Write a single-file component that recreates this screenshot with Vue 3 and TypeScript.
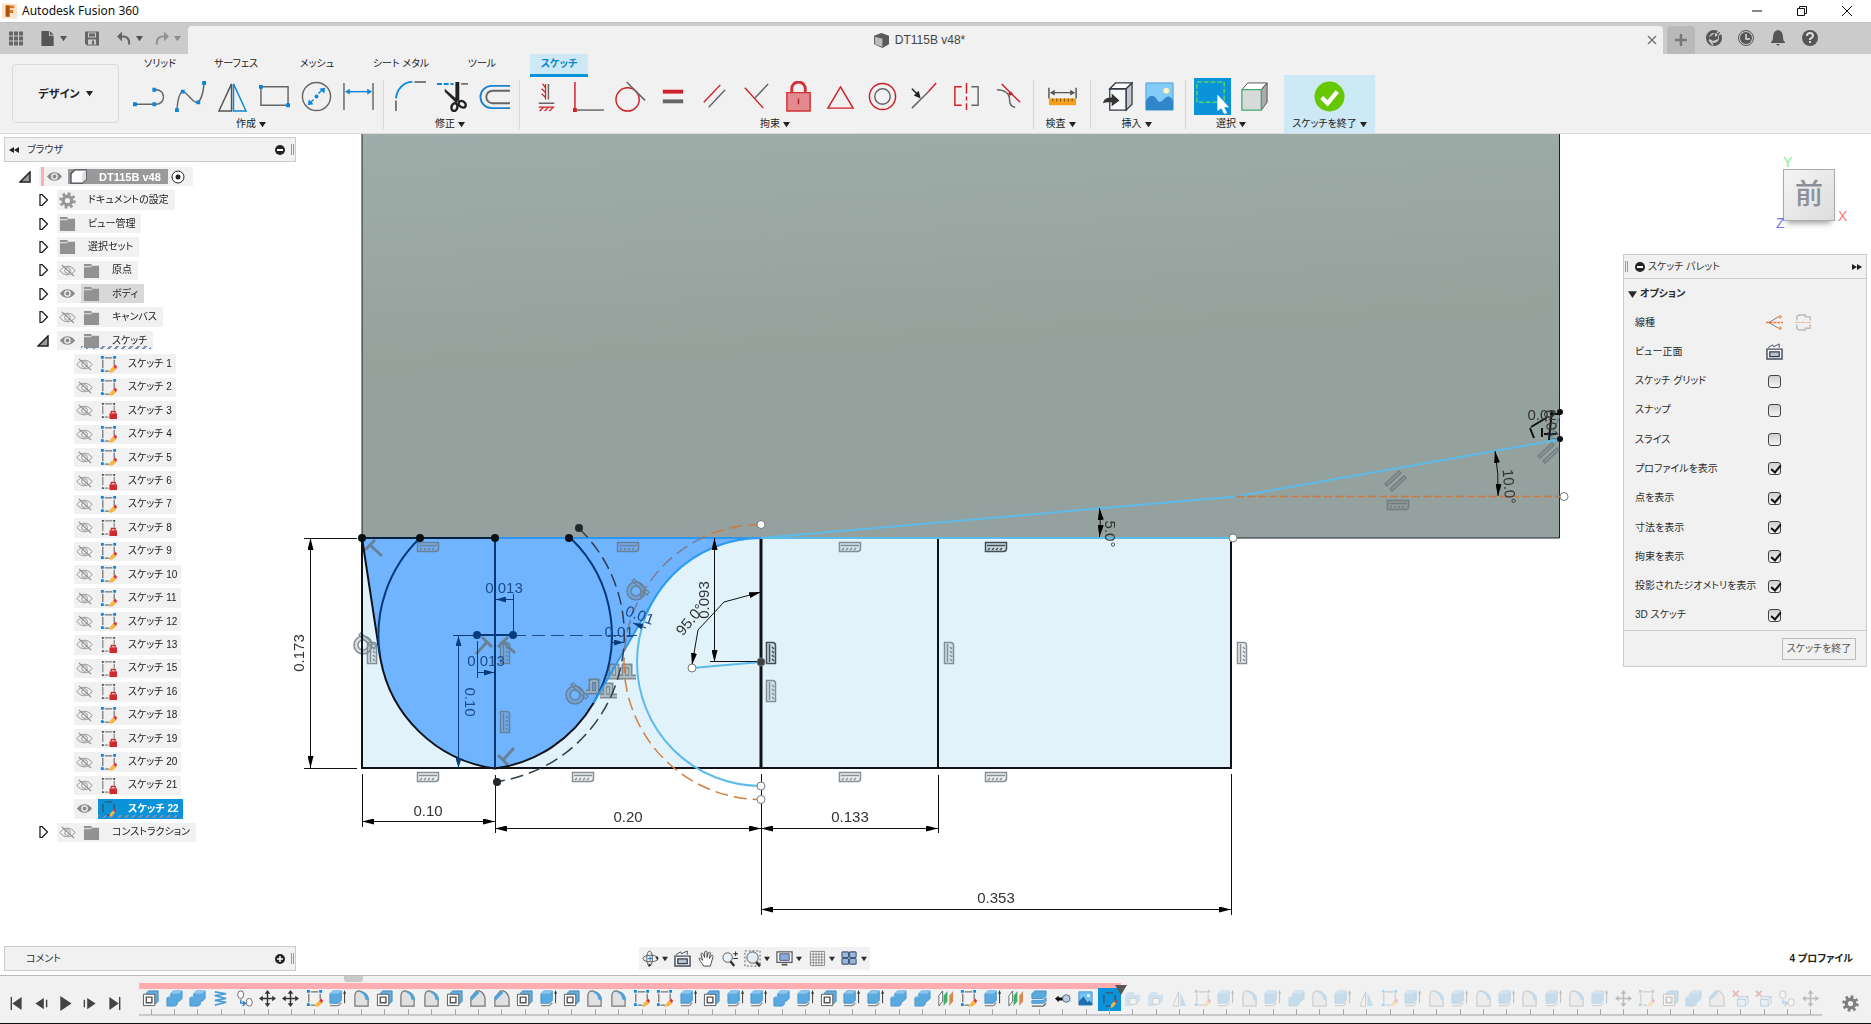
<script setup lang="ts">
import { ref } from 'vue'

interface TreeRow {
  label: string
  level: 0 | 1 | 2
  arrow?: 'open' | 'closed'
  eye?: 'on' | 'off'
  icon: string
  state?: 'root' | 'hover' | 'active'
  hatched?: boolean
}
interface Group { label: string; kind: string; icons: string[] }
interface Glyph { icon: string; x: number; y: number; rot?: number; dark?: boolean }

const tabs = ['ソリッド', 'サーフェス', 'メッシュ', 'シート メタル', 'ツール', 'スケッチ']

const groups: Group[] = [
  { label: '作成', kind: 'create', icons: ['line', 'spline', 'mirror', 'rect', 'circle', 'dimension'] },
  { label: '修正', kind: 'modify', icons: ['fillet', 'trim', 'offset'] },
  { label: '拘束', kind: 'constrain', icons: ['fix', 'coincident', 'tangent', 'equal', 'parallel', 'perp', 'lock', 'polygon', 'concentric', 'midpoint', 'symmetry', 'curvature'] },
  { label: '検査', kind: 'inspect', icons: ['measure'] },
  { label: '挿入', kind: 'insert', icons: ['insert', 'image'] },
  { label: '選択', kind: 'select', icons: ['select', 'cube'] },
]

const lockedSketches = [3, 6, 8, 13, 15, 16, 19, 21]
const sketchNumbers = [1, 2, 3, 4, 5, 6, 7, 8, 9, 10, 11, 12, 13, 15, 16, 18, 19, 20, 21]

const tree: TreeRow[] = [
  { label: 'DT115B v48', level: 0, arrow: 'open', eye: 'on', icon: 'component', state: 'root' },
  { label: 'ドキュメントの設定', level: 1, arrow: 'closed', icon: 'gear' },
  { label: 'ビュー管理', level: 1, arrow: 'closed', icon: 'folder' },
  { label: '選択セット', level: 1, arrow: 'closed', icon: 'folder' },
  { label: '原点', level: 1, arrow: 'closed', eye: 'off', icon: 'folder' },
  { label: 'ボディ', level: 1, arrow: 'closed', eye: 'on', icon: 'folder', state: 'hover' },
  { label: 'キャンバス', level: 1, arrow: 'closed', eye: 'off', icon: 'folder' },
  { label: 'スケッチ', level: 1, arrow: 'open', eye: 'on', icon: 'folder', hatched: true },
  ...sketchNumbers.map((n): TreeRow => ({
    label: `スケッチ ${n}`, level: 2, eye: 'off', icon: lockedSketches.includes(n) ? 'sketch-locked' : 'sketch',
  })),
  { label: 'スケッチ 22', level: 2, eye: 'on', icon: 'sketch-active', state: 'active', hatched: true },
  { label: 'コンストラクション', level: 1, arrow: 'closed', eye: 'off', icon: 'folder' },
]

const options = ref([
  { label: 'スケッチ グリッド', on: false },
  { label: 'スナップ', on: false },
  { label: 'スライス', on: false },
  { label: 'プロファイルを表示', on: true },
  { label: '点を表示', on: true },
  { label: '寸法を表示', on: true },
  { label: '拘束を表示', on: true },
  { label: '投影されたジオメトリを表示', on: true },
  { label: '3D スケッチ', on: true },
])

const done = 'shell join join coil copy move move sketch extrude round shell round round shell chamfer chamfer shell extrude shell round round sketch sketch extrude shell extrude extrude join extrude shell extrude extrude join join plane sketch extrude plane stack pin picture'.split(' ')
const pending = 'combine combine flip sketch extrude round extrude join round extrude flip sketch extrude round extrude round extrude round extrude round extrude move sketch shell join chamfer remove remove copy move'.split(' ')
const timeline = [
  ...done.map((icon) => ({ icon, state: 'done' })),
  { icon: 'sketch-active', state: 'current' },
  ...pending.map((icon) => ({ icon, state: 'pending' })),
]

const playback = ['first', 'prev', 'play', 'next', 'last']
const navTools = [
  { icon: 'orbit', caret: true }, { icon: 'lookat', caret: false }, { icon: 'hand', caret: false },
  { icon: 'zoom', caret: false }, { icon: 'fit', caret: true }, { icon: 'display', caret: true },
  { icon: 'grid', caret: true }, { icon: 'views', caret: true },
]

const glyphs: Glyph[] = [
  { icon: 'comb', x: 428, y: 547 }, { icon: 'comb', x: 628, y: 547 },
  { icon: 'comb', x: 850, y: 547 }, { icon: 'comb', x: 996, y: 547, dark: true },
  { icon: 'comb', x: 428, y: 777 }, { icon: 'comb', x: 583, y: 777 },
  { icon: 'comb', x: 850, y: 777 }, { icon: 'comb', x: 996, y: 777 },
  { icon: 'comb', x: 1398, y: 505 },
  { icon: 'comb', x: 372, y: 653, rot: -90 }, { icon: 'comb', x: 505, y: 653, rot: -90 },
  { icon: 'comb', x: 505, y: 722, rot: -90 }, { icon: 'comb', x: 771, y: 653, rot: -90, dark: true },
  { icon: 'comb', x: 771, y: 691, rot: -90 }, { icon: 'comb', x: 949, y: 653, rot: -90 },
  { icon: 'comb', x: 1242, y: 653, rot: -90 },
  { icon: 'tan', x: 365, y: 643 }, { icon: 'tan', x: 638, y: 589 }, { icon: 'tan', x: 577, y: 693 },
  { icon: 'par', x: 1395, y: 480 }, { icon: 'par', x: 1548, y: 452 },
  { icon: 'tee', x: 373, y: 548 }, { icon: 'tee', x: 484, y: 645, rot: 90 },
  { icon: 'tee', x: 506, y: 645 }, { icon: 'tee', x: 506, y: 757, rot: 270 },
  { icon: 'perpg', x: 615, y: 671 }, { icon: 'perpg', x: 628, y: 671 },
  { icon: 'perpg', x: 595, y: 686 }, { icon: 'perpg', x: 609, y: 690 },
]
</script>

<template>
  <svg class="sprite" aria-hidden="true">
    <symbol id="caret" viewBox="0 0 8 8"><path d="M0 1h8L4 7z" fill="currentColor" /></symbol>
    <symbol id="minus" viewBox="0 0 10 10"><circle cx="5" cy="5" r="5" fill="#222" /><path d="M2 5h6" stroke="#fff" stroke-width="2" /></symbol>
    <symbol id="plus" viewBox="0 0 10 10"><circle cx="5" cy="5" r="5" fill="#222" /><path d="M2 5h6M5 2v6" stroke="#fff" stroke-width="1.500" /></symbol>
    <symbol id="left2" viewBox="0 0 10 8"><path d="M5 1v6L0 4zM10 1v6L5 4z" fill="#222" /></symbol>
    <symbol id="right2" viewBox="0 0 10 8"><path d="M0 1v6l5-3zM5 1v6l5-3z" fill="#222" /></symbol>

    <symbol id="r-line" viewBox="0 0 32 32"><path d="M2 24h20M22 9h2a7.500 7.500 0 0 1 0 15" fill="none" stroke="#666" stroke-width="1.500" /><path d="M0 22h4v4H0zM20 22h4v4h-4zM20 7h4v4h-4z" fill="#0a86dc" /></symbol>
    <symbol id="r-spline" viewBox="0 0 32 32"><path d="M2 30C3 16 5 12 8 11s10 11 14 11 7-8 8-20" fill="none" stroke="#666" stroke-width="1.500" /><path d="M0 28h4v4H0zM6 9h4v4H6zM22 20h4v4h-4zM28 0h4v4h-4z" fill="#0a86dc" /></symbol>
    <symbol id="r-mirror" viewBox="0 0 32 32"><path d="M15 3v28H2z" fill="none" stroke="#555" stroke-width="1.500" /><path d="M17 3v28h13z" fill="none" stroke="#0a86dc" stroke-width="1.500" /></symbol>
    <symbol id="r-rect" viewBox="0 0 32 32"><path d="M2 6h28v19H2z" fill="none" stroke="#666" stroke-width="1.500" /><path d="M0 4h4v4H0zM28 23h4v4h-4z" fill="#0a86dc" /></symbol>
    <symbol id="r-circle" viewBox="0 0 32 32"><circle cx="16" cy="16" r="14.500" fill="none" stroke="#666" stroke-width="1.500" /><path d="M9 23l4-4M18 13l4-4" stroke="#0a86dc" stroke-width="1.500" /><circle cx="16" cy="16" r="2" fill="#0a86dc" /><path d="M7 25l1-6 5 5zM25 7l-1 6-5-5z" fill="#0a86dc" /></symbol>
    <symbol id="r-dimension" viewBox="0 0 32 32"><path d="M1 2v28M31 2v28" stroke="#666" stroke-width="1.500" /><path d="M4 11h24" stroke="#0a86dc" stroke-width="1.500" /><path d="M2 11l5-3v6zM30 11l-5-3v6z" fill="#0a86dc" /></symbol>
    <symbol id="r-fillet" viewBox="0 0 32 32"><path d="M1 31V20M20 1h12" stroke="#555" stroke-width="1.500" /><path d="M1 18C2 8 9 1 18 1" fill="none" stroke="#0a86dc" stroke-width="1.800" /></symbol>
    <symbol id="r-trim" viewBox="0 0 32 32"><path d="M0 3h17" stroke="#0a86dc" stroke-width="2" stroke-dasharray="5 2" /><path d="M25 3h7" stroke="#555" stroke-width="1.500" /><path d="M8 8l14 12-2 3L8 11zM19 1h4v19h-4z" fill="#222" /><g fill="none" stroke="#222" stroke-width="2.500"><ellipse cx="18" cy="27" rx="3" ry="4" transform="rotate(15 18 27)" /><ellipse cx="26" cy="24" rx="4" ry="3" transform="rotate(35 26 24)" /></g></symbol>
    <symbol id="r-offset" viewBox="0 0 32 32"><path d="M32 5H13a11 11 0 0 0 0 23h19" fill="none" stroke="#1a82d0" stroke-width="2" /><path d="M32 10H14a6 6 0 0 0 0 13h18" fill="none" stroke="#666" stroke-width="2" /></symbol>
    <symbol id="r-fix" viewBox="0 0 32 32"><path d="M18 3v16M8 23h16" stroke="#666" stroke-width="1.500" /><path d="M15 3v16M12 3l3 4M11 8l4 4M11 13l4 4M8 27h16M13 27l-4 4M18 27l-4 4M23 27l-4 4" stroke="#cf1f27" stroke-width="1.300" fill="none" /></symbol>
    <symbol id="r-coincident" viewBox="0 0 32 32"><path d="M2 1v28" stroke="#cf1f27" stroke-width="1.500" /><path d="M4 30h28" stroke="#666" stroke-width="1.500" /><path d="M0 28h4v4H0z" fill="#cf1f27" /></symbol>
    <symbol id="r-tangent" viewBox="0 0 32 32"><circle cx="13" cy="19" r="12" fill="none" stroke="#cf1f27" stroke-width="1.500" /><path d="M12 1l19 19" stroke="#666" stroke-width="1.500" /></symbol>
    <symbol id="r-equal" viewBox="0 0 32 32"><path d="M6 11h21" stroke="#cf1f27" stroke-width="4" /><path d="M6 21h21" stroke="#666" stroke-width="4" /></symbol>
    <symbol id="r-parallel" viewBox="0 0 32 32"><path d="M5 22L22 4" stroke="#cf1f27" stroke-width="1.500" /><path d="M10 27L27 9" stroke="#666" stroke-width="1.500" /></symbol>
    <symbol id="r-perp" viewBox="0 0 32 32"><path d="M4 7l19 21" stroke="#cf1f27" stroke-width="1.500" /><path d="M14 18L28 3" stroke="#666" stroke-width="1.500" /></symbol>
    <symbol id="r-lock" viewBox="0 0 32 32"><path d="M9 12V8a7 7 0 0 1 14 0v4" fill="none" stroke="#cf3338" stroke-width="3" /><path d="M4 12h24v19H4z" fill="#e28a8d" stroke="#cf3338" stroke-width="1.500" /><path d="M16 18v6" stroke="#a3282d" stroke-width="1.500" /></symbol>
    <symbol id="r-polygon" viewBox="0 0 32 32"><path d="M16 6l13 22H3z" fill="none" stroke="#cf1f27" stroke-width="1.500" /></symbol>
    <symbol id="r-concentric" viewBox="0 0 32 32"><circle cx="16" cy="16" r="13.500" fill="none" stroke="#cf1f27" stroke-width="1.500" /><circle cx="16" cy="16" r="8" fill="none" stroke="#666" stroke-width="1.500" /></symbol>
    <symbol id="r-midpoint" viewBox="0 0 32 32"><path d="M3 28l17-17" stroke="#666" stroke-width="1.500" /><path d="M20 11l8-9" stroke="#cf1f27" stroke-width="1.500" /><path d="M3 8l8 8" stroke="#222" stroke-width="1.500" /><path d="M12 18l-7-3 5-5z" fill="#222" /></symbol>
    <symbol id="r-symmetry" viewBox="0 0 32 32"><path d="M11 6H4v19h7" fill="none" stroke="#cf1f27" stroke-width="1.500" /><path d="M21 6h7v19h-7" fill="none" stroke="#666" stroke-width="1.500" /><path d="M16 2v28" stroke="#cf1f27" stroke-width="1.500" stroke-dasharray="11 3 4 3" /></symbol>
    <symbol id="r-curvature" viewBox="0 0 32 32"><path d="M9 3l19 19" stroke="#cf1f27" stroke-width="1.500" /><path d="M4 9c8 0 13 4 13 9s2 9 6 9" fill="none" stroke="#666" stroke-width="1.500" /><circle cx="18" cy="13" r="2" fill="#cf1f27" /></symbol>
    <symbol id="r-measure" viewBox="0 0 32 32"><path d="M2 7v11M30 7v11M4 12h24" stroke="#555" stroke-width="1.500" /><path d="M3 12l5-3v6zM29 12l-5-3v6z" fill="#555" /><path d="M2 18h28v7H2z" fill="#f2a01e" /><path d="M6 18v3M10 18v3M14 18v3M18 18v3M22 18v3M26 18v3" stroke="#7a4c00" /></symbol>
    <symbol id="r-insert" viewBox="0 0 32 32"><path d="M8 8h17v22H8z" fill="#f6f7f9" stroke="#333842" stroke-width="1.300" /><path d="M8 8l6-6h17l-6 6z" fill="#fff" stroke="#333842" stroke-width="1.300" /><path d="M25 8l6-6v22l-6 6z" fill="#c3c6cc" stroke="#333842" stroke-width="1.300" /><path d="M1 23c1-5 5-6 9-6v-4l8 7-8 6v-4c-4 0-7 0-9 1z" fill="#333" /></symbol>
    <symbol id="r-image" viewBox="0 0 32 32"><path d="M2 2h28v28H2z" fill="#84ccf8" stroke="#4a9fd9" /><circle cx="23" cy="10" r="3" fill="#fff3c0" /><path d="M2 20c4-6 8-7 12 0 4 5 7-4 11-4 2 0 4 2 5 4v10H2z" fill="#2f87c9" /></symbol>
    <symbol id="r-select" viewBox="0 0 38 38"><path d="M0 0h38v38H0z" fill="#0a93d9" /><path d="M3 4h28v21H3z" fill="none" stroke="#58d36a" stroke-width="1.500" stroke-dasharray="5 2" /><path d="M24 17v17l4-3 3 6 3-1-3-6h5z" fill="#fff" /></symbol>
    <symbol id="r-cube" viewBox="0 0 32 32"><path d="M3 9l6-7h20l-6 7z" fill="#fff" stroke="#555" /><path d="M23 9l6-7v20l-6 8z" fill="#aaa" stroke="#555" /><path d="M3 9h20v21H3z" fill="#d8dad9" stroke="#45a871" stroke-width="1.300" /></symbol>
    <symbol id="r-check" viewBox="0 0 32 32"><circle cx="16" cy="16" r="15.500" fill="#65c800" /><path d="M8 17l6 6L24 11" fill="none" stroke="#fff" stroke-width="4.500" /></symbol>

    <symbol id="t-gear" viewBox="0 0 18 18"><circle cx="9" cy="9" r="7" fill="none" stroke="currentColor" stroke-width="3.500" stroke-dasharray="2.750 2.750" /><circle cx="9" cy="9" r="4.500" fill="none" stroke="currentColor" stroke-width="3.500" /></symbol>
    <symbol id="t-folder" viewBox="0 0 18 18"><path d="M1 2h8v2h8v13H1z" fill="#929292" /><path d="M1 5h8" stroke="#f1f1f1" /></symbol>
    <symbol id="t-component" viewBox="0 0 18 18"><path d="M1 6l4-4h12v10l-4 4H1z" fill="#fff" stroke="#4a4f5a" stroke-width="1.500" /><path d="M13 6l4-4v10l-4 4z" fill="#ddd" /></symbol>
    <symbol id="t-eye" viewBox="0 0 18 18"><path d="M1 9c4-6 12-6 16 0-4 6-12 6-16 0z" fill="#8b8b8b" /><circle cx="9" cy="9" r="3.500" fill="#f1f1f1" /><circle cx="9" cy="9" r="2" fill="#8b8b8b" /></symbol>
    <symbol id="t-eye-off" viewBox="0 0 18 18"><path d="M1 9c4-6 12-6 16 0-4 6-12 6-16 0z" fill="none" stroke="#8d8d8d" /><circle cx="9" cy="9" r="3" fill="none" stroke="#8d8d8d" /><path d="M3 3l13 12" stroke="#8d8d8d" stroke-width="1.300" /></symbol>
    <symbol id="t-sketch" viewBox="0 0 18 18"><path d="M5 2h8M3 4v9M15 4v6M5 16h5" stroke="#4b4b4b" fill="none" /><path d="M1 0h3v3H1zM14 0h3v3h-3zM1 14h3v3H1z" fill="#0a86dc" /><path d="M10 18l1-4 3-3 3 3-3 3z" fill="#f6b640" /><path d="M14 11l2-2 2 2-1 3z" fill="#e1332d" /></symbol>
    <symbol id="t-sketch-locked" viewBox="0 0 18 18"><path d="M5 2h8M3 4v9M15 4v5M5 16h4" stroke="#666" fill="none" /><path d="M2 1h2v2H2zM14 1h2v2h-2zM2 15h2v2H2z" fill="#444" /><path d="M10 12h8v6h-8z" fill="#cf2b2f" /><path d="M12 12v-2h4v2" fill="none" stroke="#cf2b2f" stroke-width="1.500" /></symbol>
    <symbol id="t-sketch-active" viewBox="0 0 18 18"><path d="M5 2h8M3 4v9M15 4v6M5 16h5" stroke="#3b5468" fill="none" stroke-width="1.500" /><path d="M10 18l1-4 3-3 2 2-3 4z" fill="#f6b640" /><path d="M14 11l2-2 1 2-1 2z" fill="#e1332d" /></symbol>

    <symbol id="f-shell" viewBox="0 0 18 18"><path d="M4 4l3-3h10v11l-3 3" fill="#63aee2" stroke="#3b86b8" /><path d="M1.500 4.500h12v12h-12z" fill="#fff" stroke="#555" /><path d="M4.500 7.500h6v6h-6z" fill="#f6f6f6" stroke="#555" stroke-width="1.500" /></symbol>
    <symbol id="f-join" viewBox="0 0 18 18"><path d="M1 8h4V4l3-3h9v8l-3 3h-2v3l-2 2H1z" fill="#5aa9df" stroke="#4795cc" /><path d="M5 4l3-3h9l-3 3zM1 8l2-2h2v2z" fill="#8ac6ef" /></symbol>
    <symbol id="f-coil" viewBox="0 0 18 18"><path d="M3 2l12 2-12 2 12 3-12 2 12 2-12 3" fill="none" stroke="#4a9dd6" stroke-width="1.800" /></symbol>
    <symbol id="f-copy" viewBox="0 0 18 18"><rect x="2" y="1" width="6" height="8" rx="3" fill="#fff" stroke="#666" /><rect x="11" y="9" width="6" height="8" rx="3" fill="#fff" stroke="#666" /><path d="M5 10v4h4M7 12l3 2-3 3" fill="none" stroke="#1f7dcb" stroke-width="1.300" /></symbol>
    <symbol id="f-move" viewBox="0 0 18 18"><path d="M9 2v14M2 9h14" stroke="#333" stroke-width="1.500" /><path d="M9 0l3 4H6zM9 18l3-4H6zM0 9l4-3v6zM18 9l-4-3v6z" fill="#333" /></symbol>
    <symbol id="f-extrude" viewBox="0 0 18 18"><path d="M1 4l3-3h9v10l-3 3H1z" fill="#5aa9df" stroke="#4795cc" /><path d="M1 4l3-3h9l-3 3z" fill="#8ac6ef" /><path d="M1 16.500h9l3-3" fill="none" stroke="#888" stroke-width="1.300" /><path d="M16.500 2v12" stroke="#333" /><path d="M15 4l1.500-4L18 4z" fill="#333" /></symbol>
    <symbol id="f-round" viewBox="0 0 18 18"><path d="M2 17V6q0-5 5-5 9 2 9 10v6z" fill="#e0e0e0" stroke="#777" stroke-width="1.300" /><path d="M8 1q9 2 9 10l-4-1q0-5-5-7z" fill="#4fa2db" /></symbol>
    <symbol id="f-chamfer" viewBox="0 0 18 18"><path d="M2 17V8l6-7h3q5 2 6 8v8z" fill="#e0e0e0" stroke="#777" stroke-width="1.300" /><path d="M1 8l7-7 3 2-8 8z" fill="#4fa2db" /></symbol>
    <symbol id="f-plane" viewBox="0 0 18 18"><path d="M2 6l4-5v11l-4 5z" fill="#fff" stroke="#666" /><path d="M7 6l4-5v11l-4 5z" fill="#3fae69" /><path d="M13 6l4-5v11l-4 5z" fill="#d98a51" /></symbol>
    <symbol id="f-stack" viewBox="0 0 18 18"><path d="M2 4l3-3h12v5l-3 3H2zM2 11h12l3-3v4l-3 2H2z" fill="#5aa9df" stroke="#4795cc" /><path d="M2 17h12l3-3" fill="none" stroke="#666" stroke-width="1.300" /></symbol>
    <symbol id="f-pin" viewBox="0 0 18 18"><circle cx="13" cy="9" r="4" fill="#b8cde6" stroke="#567" /><path d="M1 9l4-3v2h4v3H5v2z" fill="#111" /></symbol>
    <symbol id="f-picture" viewBox="0 0 18 18"><path d="M2 2h14v14H2z" fill="#73c2f3" stroke="#4c94c8" /><path d="M2 12l5-5 4 6 2-2 3 3v2H2z" fill="#1f6fae" /><circle cx="12" cy="6" r="1.500" fill="#fff" /></symbol>
    <symbol id="f-combine" viewBox="0 0 18 18"><path d="M1 6l3-4h7v3h6v6l-3 4H9v2H1z" fill="#7fbce8" /><path d="M6 9h7v6H6z" fill="#fff" stroke="#777" /></symbol>
    <symbol id="f-flip" viewBox="0 0 18 18"><path d="M8 2v15H2z" fill="#fff" stroke="#666" /><path d="M10 2v15h6z" fill="#58a9e0" /></symbol>
    <symbol id="f-remove" viewBox="0 0 18 18"><path d="M1 1l6 6M7 1L1 7" stroke="#d12d2d" stroke-width="2" /><path d="M6 10l3-3h8v7l-3 3H6zM6 10h8v7M14 10l3-3" fill="#dcecf8" stroke="#3a7cab" /></symbol>

    <symbol id="p-first" viewBox="0 0 16 16"><path d="M3 1v14" stroke="#444" stroke-width="1.500" /><path d="M14 1v14L4 8z" fill="#444" /></symbol>
    <symbol id="p-prev" viewBox="0 0 16 16"><path d="M11 2v12L2 8z" fill="#444" /><path d="M14 4v8" stroke="#444" stroke-width="1.500" /></symbol>
    <symbol id="p-play" viewBox="0 0 16 16"><path d="M3 0v16l12-8z" fill="#444" /></symbol>
    <symbol id="p-next" viewBox="0 0 16 16"><path d="M5 2v12l9-6z" fill="#444" /><path d="M2 4v8" stroke="#444" stroke-width="1.500" /></symbol>
    <symbol id="p-last" viewBox="0 0 16 16"><path d="M2 1v14l10-7z" fill="#444" /><path d="M13 1v14" stroke="#444" stroke-width="1.500" /></symbol>

    <symbol id="n-orbit" viewBox="0 0 18 18"><g fill="none" stroke="#555"><ellipse cx="9" cy="9" rx="8" ry="3.500" /><ellipse cx="8" cy="9" rx="3" ry="8" /></g><path d="M6 9h5M8.500 6.500v5" stroke="#1f7dcb" /><path d="M10 16l-3-2v4zM17 7l-3 1 3 3z" fill="#333" /></symbol>
    <symbol id="n-lookat" viewBox="0 0 18 18"><path d="M1 6.500h16v10.500H1z" fill="#f6f6f6" stroke="#444d5c" stroke-width="1.500" /><path d="M4 9.500h10v5H4z" fill="#b9c2cf" stroke="#333c49" stroke-width="1.300" /><path d="M2 5l5-3 1 2 6-3v4" fill="none" stroke="#444d5c" /></symbol>
    <symbol id="n-hand" viewBox="0 0 18 18"><path d="M6 17c-2-4-4-5-5-8 1-1 2 0 4 2L3 4c1-1 2-1 3 1l1 3V2c1-1 2-1 2.500 0V8l1.500-5c1-1 2-1 2 1l-1 5 2-3c1-1 2 0 2 1l-3 10z" fill="#fff" stroke="#444" /></symbol>
    <symbol id="n-zoom" viewBox="0 0 18 18"><circle cx="7" cy="8" r="5" fill="#e8f2fa" stroke="#555" /><path d="M10 12l4 5" stroke="#333" stroke-width="2.500" /><path d="M13 4h5M15.500 1.500v5M13 9h5" stroke="#222" /></symbol>
    <symbol id="n-fit" viewBox="0 0 18 18"><path d="M1 1h16v16H1z" fill="none" stroke="#555" stroke-dasharray="2 2" /><circle cx="9" cy="8" r="6" fill="#e2eef7" stroke="#555" /><path d="M13 13l4 4" stroke="#333" stroke-width="3" /></symbol>
    <symbol id="n-display" viewBox="0 0 18 18"><path d="M1 2h16v11H1z" fill="#fff" stroke="#555" stroke-width="1.300" /><path d="M4 4h10v7H4z" fill="#8eabd6" stroke="#445a80" /><path d="M6 15.500h6" stroke="#555" stroke-width="2" /></symbol>
    <symbol id="n-grid" viewBox="0 0 18 18"><path d="M1.500 1.500h15v15h-15zM4.500 1v16M7.500 1v16M10.500 1v16M13.500 1v16M1 4.500h16M1 7.500h16M1 10.500h16M1 13.500h16" fill="#fff" stroke="#777" stroke-width=".8" /></symbol>
    <symbol id="n-views" viewBox="0 0 18 18"><g fill="#9cb7dc" stroke="#44597d" stroke-width="1.200"><rect x="1" y="2" width="7" height="6" rx="1" /><rect x="9" y="2" width="7" height="6" rx="1" /><rect x="1" y="9" width="7" height="6" rx="1" /><rect x="9" y="9" width="7" height="6" rx="1" /></g></symbol>

    <symbol id="g-comb" viewBox="-12 -12 24 24"><path d="M-10.500 -4.500h21v6c0 2-1 3-3 3h-18z" fill="currentColor" fill-opacity=".15" stroke="currentColor" stroke-width="1.500" /><path d="M-9 -1.500H9" stroke="currentColor" stroke-width="1.500" /><path d="M-8 3l2-2M-4 3l2-2M0 3l2-2M4 3l2-2" stroke="currentColor" stroke-width="1.500" /></symbol>
    <symbol id="g-tan" viewBox="-12 -12 24 24"><g fill="none" stroke="currentColor"><circle cx="-2" cy="2" r="7" stroke-opacity=".3" stroke-width="4" /><circle cx="-2" cy="2" r="9" stroke-width="1.500" /><circle cx="-2" cy="2" r="5" stroke-width="1.500" /><path d="M-4 -10l15 13-2 3L-6 -8z" stroke-width="1.300" /></g></symbol>
    <symbol id="g-par" viewBox="-12 -12 24 24"><g fill="currentColor" fill-opacity=".25" stroke="currentColor" stroke-width="1.300"><path d="M-10 4L4 -9l2 2L-8 6zM-5 9L9 -4l2 2L-3 11z" /></g></symbol>
    <symbol id="g-tee" viewBox="-12 -12 24 24"><path d="M-8 2L2 -8M-3 -3L9 8" stroke="currentColor" stroke-width="3" fill="none" /></symbol>
    <symbol id="g-perpg" viewBox="-12 -12 24 24"><path d="M-9 6H8M-4 5v-10h6V5" stroke="currentColor" stroke-width="5" fill="none" /><path d="M-9 6H8M-4 5v-10h6V5" stroke="#d5e2e8" fill="none" /></symbol>
  </svg>

  <div class="app">
    <header class="titlebar">
      <svg class="logo" viewBox="0 0 16 16"><path d="M0 0h16v16H0z" fill="#fde3cb" /><path d="M4 2h9v3H8v2h4v3H8v4H4z" fill="#dd7a1d" /><path d="M4 2h4v12H4z" fill="#a9530f" /></svg>
      <h1>Autodesk Fusion 360</h1>
      <div class="window-buttons">
        <button aria-label="最小化"><svg viewBox="0 0 12 12"><path d="M1 6h10" stroke="#111" /></svg></button>
        <button aria-label="元に戻す"><svg viewBox="0 0 12 12"><path d="M1.500 3.500h7v7h-7zM3.500 3.500v-2h7v7h-2" fill="none" stroke="#111" /></svg></button>
        <button aria-label="閉じる"><svg viewBox="0 0 12 12"><path d="M1 1l10 10M11 1L1 11" stroke="#111" /></svg></button>
      </div>
    </header>

    <div class="docbar">
      <div class="quick">
        <button aria-label="データ パネル"><svg viewBox="0 0 14 14"><path d="M0 0h4v4H0zM5 0h4v4H5zM10 0h4v4h-4zM0 5h4v4H0zM5 5h4v4H5zM10 5h4v4h-4zM0 10h4v4H0zM5 10h4v4H5zM10 10h4v4h-4z" fill="#666" /></svg></button>
        <button aria-label="ファイル"><svg viewBox="0 0 14 16"><path d="M0 0h8v5h5v11H0z" fill="#555" /><path d="M9 0l4 4H9z" fill="#555" /></svg><svg class="caret"><use href="#caret" /></svg></button>
        <button aria-label="保存"><svg viewBox="0 0 14 14"><path d="M0 0h14v14H2l-2-2z" fill="#666" /><path d="M3 1h8v5H3zM3 8h8v5H3z" fill="#cbcbcb" /><path d="M4 2h6v3H4zM7 9h2v4H7z" fill="#666" /></svg></button>
        <button aria-label="戻る"><svg viewBox="0 0 14 14"><path d="M3 5h4q6 1 5 8" fill="none" stroke="#666" stroke-width="2" /><path d="M0 5l5-5v10z" fill="#666" /></svg><svg class="caret"><use href="#caret" /></svg></button>
        <button class="q-redo" aria-label="進む"><svg viewBox="0 0 14 14"><path d="M11 5H7q-6 1-5 8" fill="none" stroke="#929292" stroke-width="2" /><path d="M14 5L9 0v10z" fill="#929292" /></svg><svg class="caret"><use href="#caret" /></svg></button>
      </div>
      <div class="doctab">
        <svg class="doc-icon" viewBox="0 0 16 16"><path d="M0 3l8-3 8 3v9l-7 4-9-4z" fill="#5a5a5a" /><path d="M1 4l8 2v9l-8-3z" fill="#bbb" /></svg>
        <span>DT115B v48*</span>
        <button class="doc-close" aria-label="閉じる"><svg viewBox="0 0 12 12"><path d="M2 2l8 8M10 2l-8 8" stroke="#777" stroke-width="1.500" /></svg></button>
      </div>
      <button class="newtab" aria-label="新しいデザイン"><svg viewBox="0 0 14 14"><path d="M7 1v12M1 7h12" stroke="#777" stroke-width="2.500" /></svg></button>
      <div class="status">
        <button aria-label="拡張機能"><svg viewBox="0 0 16 16"><circle cx="8" cy="8" r="6.500" fill="none" stroke="#555" stroke-width="3" /><path d="M2 8l5 3 5-2V5l-3 2V3z" fill="#555" /><path d="M11 3l3-3M13 5l3-3M3 10l4 5" stroke="#cbcbcb" stroke-width="1.500" /></svg></button>
        <button aria-label="ジョブの状態"><svg viewBox="0 0 16 16"><circle cx="8" cy="8" r="7.500" fill="none" stroke="#555" /><circle cx="8" cy="8" r="6" fill="#555" /><path d="M8 4v5h4" fill="none" stroke="#ddd" stroke-width="1.500" /></svg></button>
        <button aria-label="通知"><svg viewBox="0 0 16 16"><path d="M8 0q5 1 5 7 0 4 2 5v1H1v-1q2-1 2-5 0-6 5-7zM6 14h4l-2 2z" fill="#555" /></svg></button>
        <button aria-label="ヘルプ"><svg viewBox="0 0 16 16"><circle cx="8" cy="8" r="8" fill="#555" /><path d="M5 6q0-3 3-3t3 3q0 1-3 3v1M8 11v2" fill="none" stroke="#ddd" stroke-width="2" /></svg></button>
      </div>
    </div>

    <div class="ribbon">
      <button class="workspace">デザイン<svg class="caret"><use href="#caret" /></svg></button>
      <div class="ribbon-main">
        <nav class="tabs">
          <a v-for="tab in tabs" :key="tab" href="#" :class="{ active: tab === 'スケッチ' }">{{ tab }}</a>
        </nav>
        <div class="groups">
          <section v-for="g in groups" :key="g.kind" class="group" :class="g.kind">
            <div class="tools">
              <button v-for="icon in g.icons" :key="icon" class="tool" :class="{ big: icon === 'select' }" :aria-label="icon">
                <svg><use :href="`#r-${icon}`" /></svg>
              </button>
            </div>
            <button class="group-label">{{ g.label }}<svg class="caret"><use href="#caret" /></svg></button>
          </section>
          <section class="group finish">
            <div class="tools"><button class="tool" aria-label="スケッチを終了"><svg><use href="#r-check" /></svg></button></div>
            <button class="group-label">スケッチを終了<svg class="caret"><use href="#caret" /></svg></button>
          </section>
        </div>
      </div>
    </div>

    <main class="canvas">
      <svg class="drawing" viewBox="0 134 1871 841" preserveAspectRatio="xMinYMin slice">
        <defs>
          <linearGradient id="body" x1="0" y1="0" x2="0.150" y2="1"><stop offset="0" stop-color="#9fadaa" /><stop offset=".55" stop-color="#96a29c" /><stop offset="1" stop-color="#95a19e" /></linearGradient>
          <marker id="arrow" viewBox="0 0 12 6" refX="12" refY="3" markerWidth="12" markerHeight="6" markerUnits="userSpaceOnUse" orient="auto-start-reverse"><path d="M0 0l12 3-12 3z" /></marker>
          <marker id="arrow-blue" viewBox="0 0 10 6" refX="10" refY="3" markerWidth="10" markerHeight="6" markerUnits="userSpaceOnUse" orient="auto-start-reverse"><path d="M0 0l10 3-10 3z" fill="#0b3c7a" /></marker>
        </defs>
        <path d="M362 130H1559.500V538H362z" fill="url(#body)" stroke="#16232a" />
        <path d="M362 538H1231V768H362z" fill="#e1f2fb" />
        <path d="M362 538H761A124 124 0 0 0 653.800 599.600L593.700 702.800A134.700 134.700 0 0 1 495 768.500A134.700 134.700 0 0 1 379.900 655.400Z" fill="#70b4ff" />

        <g class="glyphs">
          <svg v-for="(g, i) in glyphs" :key="i" :x="g.x - 12" :y="g.y - 12" width="24" height="24" viewBox="-12 -12 24 24" :class="{ dark: g.dark }">
            <use :href="`#g-${g.icon}`" x="-12" y="-12" width="24" height="24" :transform="`rotate(${g.rot ?? 0})`" />
          </svg>
        </g>

        <g fill="none" stroke="#101418" stroke-width="2">
          <path d="M362 538V768H1231V538M938 538V768" />
          <path d="M761 538V768" stroke-width="3" />
          <path d="M362 538L379.900 655.400A134.700 134.700 0 0 0 495 768.500A134.700 134.700 0 0 0 593.700 702.800" />
        </g>
        <g fill="none" stroke="#06397a" stroke-width="2">
          <path d="M362 538H495" stroke="#08213f" />
          <path d="M495 538V768M477 635H513" />
          <path d="M420 538A134.700 134.700 0 0 0 379.900 655.400M570.500 538A134.700 134.700 0 0 1 593.700 702.800" />
        </g>
        <g fill="none" stroke="#5dbbea" stroke-width="2">
          <path d="M495 538H761" stroke="#2c96f2" />
          <path d="M761 538H1231M761 538L1236 496.500L1560 439.500" />
          <path d="M761 538A124 124 0 0 0 761 786" />
          <path d="M761 538A124 124 0 0 0 653.800 599.600L593.700 702.800" stroke="#2e9bf5" />
          <path d="M761 662L692 668" />
        </g>
        <g fill="none" stroke-dasharray="13 6">
          <path d="M624 660A137.500 137.500 0 0 0 761 799.500" stroke="#d17f3f" stroke-width="1.500" />
          <path d="M761 524.500A137.500 137.500 0 0 0 704 537" stroke="#c97a42" stroke-width="1.500" />
          <path d="M704 537A137.500 137.500 0 0 0 624 660" stroke="#7c7d8e" stroke-width="1.500" />
          <path d="M1236 496.500H1562" stroke="#c97a42" stroke-width="1.500" stroke-dasharray="8 3" />
          <path d="M578.600 528A148 148 0 0 1 497 781.500" stroke="#2f3d4d" stroke-width="1.500" />
          <path d="M513 635.500H637" stroke="#1d5089" />
        </g>

        <g class="dims">
          <path d="M362.500 774V827M495.500 775V833M938.500 775V833M1231.500 774V915" />
          <path d="M761.500 774V915" />
          <path d="M304 538.500H357M304 768.500H357M710 661.500H761" />
          <g marker-start="url(#arrow)" marker-end="url(#arrow)">
            <path d="M362 821.500H495" /><path d="M495 828.500H761" /><path d="M761 828.500H938" /><path d="M761 909.500H1231" />
            <path d="M310.500 538V768" /><path d="M714.500 538V662" />
            <path d="M761 592L724 602L698 630L692 665" />
            <path d="M1099.500 508Q1101 522 1099.500 537" /><path d="M1495 451Q1499 474 1498 496" />
          </g>
          <path d="M1531 427L1546 418M1542 428V437M1552 410L1549 440M1544 434H1556M1550 414H1560M1534 438L1530 428" stroke-width="2" />
          <path d="M1560 416L1550 438L1558 439" stroke="#3d7f9f" stroke-width="1" />
        </g>
        <g class="dims blue">
          <path d="M513.500 594V632M477.500 641V678M453 635.500H477" />
          <g marker-start="url(#arrow-blue)" marker-end="url(#arrow-blue)">
            <path d="M458.500 636V768" />
          </g>
          <g marker-end="url(#arrow-blue)"><path d="M513 599.500H496" /><path d="M477 672.500H494" /><path d="M612 642.500H624" /><path d="M646 628L633 623" /></g>
        </g>

        <g class="values">
          <text x="428" y="816">0.10</text>
          <text x="628" y="822">0.20</text>
          <text x="850" y="822">0.133</text>
          <text x="996" y="903">0.353</text>
          <text transform="translate(304 653) rotate(-90)">0.173</text>
          <text transform="translate(709 600) rotate(-90)">0.093</text>
          <text transform="translate(694 623) rotate(-50)">95.0°</text>
          <text transform="translate(1105 534) rotate(90)">5.0°</text>
          <text transform="translate(1504 487) rotate(85)">10.0°</text>
          <text transform="translate(1542 420)">0.02</text>
          <text transform="translate(1546 425) rotate(80)">0.01</text>
          <g class="blue">
            <text x="504" y="593">0.013</text>
            <text x="486" y="666">0.013</text>
            <text x="619" y="637">0.01</text>
            <text transform="translate(465 702) rotate(90)">0.10</text>
            <text transform="translate(638 620) rotate(20)">0.01</text>
          </g>
        </g>

        <g fill="#0a0f14"><circle cx="362" cy="538" r="4" /><circle cx="420" cy="538" r="4" /><circle cx="495" cy="538" r="4" /><circle cx="569" cy="538" r="4" /><circle cx="1560" cy="439" r="3" /><circle cx="1560" cy="412" r="3" /></g>
        <g fill="#22272b"><circle cx="579" cy="528" r="4" /><circle cx="497" cy="782" r="4" /></g>
        <circle cx="761" cy="662" r="4" fill="#3b3f42" stroke="#777" />
        <g fill="#063b7d"><circle cx="477" cy="635" r="4" /><circle cx="513" cy="635" r="4" /></g>
        <g fill="#fff" stroke="#777"><circle cx="761" cy="524.500" r="4" /><circle cx="761" cy="786" r="4" /><circle cx="761" cy="799.500" r="4" /><circle cx="692" cy="668" r="4" /><circle cx="1233" cy="538" r="4" /><circle cx="1564" cy="496.500" r="4" /></g>
      </svg>

      <aside class="browser">
        <div class="bar">
          <button aria-label="折りたたむ"><svg class="dbl"><use href="#left2" /></svg></button>
          <span>ブラウザ</span>
          <svg class="dot"><use href="#minus" /></svg>
          <i class="grip"></i>
        </div>
        <ul class="tree">
          <li v-for="row in tree" :key="row.label" :class="[`level${row.level}`, row.state]">
            <svg v-if="row.arrow === 'open'" class="arrow" viewBox="0 0 12 12"><path d="M11 1v10H1z" fill="#999" stroke="#222" stroke-width="1.500" /></svg>
            <svg v-else-if="row.arrow" class="arrow" viewBox="0 0 12 12"><path d="M3 0.500h2L10.500 6 5 11.500H3z" fill="#fff" stroke="#222" stroke-width="1.300" /></svg>
            <div class="item">
              <svg v-if="row.eye" class="eye"><use :href="row.eye === 'on' ? '#t-eye' : '#t-eye-off'" /></svg>
              <span class="name" :class="{ hatched: row.hatched }">
                <svg class="ico"><use :href="`#t-${row.icon}`" /></svg>
                <span>{{ row.label }}</span>
              </span>
              <svg v-if="row.state === 'root'" class="radio" viewBox="0 0 14 14"><circle cx="7" cy="7" r="6" fill="#fff" stroke="#222" /><circle cx="7" cy="7" r="2.500" fill="#222" /></svg>
            </div>
          </li>
        </ul>
      </aside>

      <div class="viewcube">
        <span class="axis y">Y</span>
        <button class="face">前</button>
        <span class="axis x">X</span>
        <span class="axis z">Z</span>
      </div>

      <aside class="palette">
        <div class="bar">
          <i class="grip"></i>
          <svg class="dot"><use href="#minus" /></svg>
          <span>スケッチ パレット</span>
          <svg class="dbl"><use href="#right2" /></svg>
        </div>
        <h2><svg class="fold"><use href="#caret" /></svg>オプション</h2>
        <div class="options">
          <div class="option">
            <span>線種</span>
            <button aria-label="コンストラクション"><svg viewBox="0 0 18 18"><path d="M15 2L3 9l12 7" fill="none" stroke="#777" /><path d="M0 9h18" stroke="#ec7a36" stroke-width="1.500" stroke-dasharray="3 1" /><path d="M13 3h4M13 15h4M15 1v4M15 13v4" stroke="#f09a67" stroke-width="1.500" /></svg></button>
            <button aria-label="中心線"><svg viewBox="0 0 18 18"><path d="M2 7V3l2-2h7v2h5v4M2 11v4l2 2h7v-2h5v-4" fill="none" stroke="#bbb" stroke-width="1.500" /><path d="M0 9h18" stroke="#f3b48f" stroke-dasharray="5 1" /></svg></button>
          </div>
          <div class="option">
            <span>ビュー正面</span>
            <button aria-label="ビュー正面"><svg><use href="#n-lookat" /></svg></button>
          </div>
          <div v-for="(o, i) in options" :key="o.label" class="option">
            <label :for="`opt${i}`">{{ o.label }}</label>
            <input :id="`opt${i}`" v-model="o.on" type="checkbox" />
          </div>
        </div>
        <div class="palette-foot"><button>スケッチを終了</button></div>
      </aside>

      <div class="comments bar">
        <span>コメント</span>
        <svg class="dot"><use href="#plus" /></svg>
        <i class="grip"></i>
      </div>

      <div class="navbar">
        <button v-for="n in navTools" :key="n.icon" :aria-label="n.icon">
          <svg class="nav-icon"><use :href="`#n-${n.icon}`" /></svg>
          <svg v-if="n.caret" class="caret"><use href="#caret" /></svg>
        </button>
      </div>

      <p class="selection">4 プロファイル</p>
    </main>

    <footer class="timeline">
      <div class="playback">
        <button v-for="p in playback" :key="p" :aria-label="p"><svg><use :href="`#p-${p}`" /></svg></button>
      </div>
      <ol class="features">
        <li v-for="(f, i) in timeline" :key="i" :class="f.state">
          <svg><use :href="f.icon.startsWith('sketch') ? `#t-${f.icon}` : `#f-${f.icon}`" /></svg>
        </li>
      </ol>
      <button class="settings" aria-label="設定"><svg><use href="#t-gear" /></svg></button>
      <i class="handle"></i>
    </footer>
  </div>
</template>

<style>
body { margin: 0; background: #fff; }
</style>

<style scoped>
* { box-sizing: border-box; }
button { border: 0; padding: 0; margin: 0; background: none; font: inherit; color: inherit; display: flex; align-items: center; justify-content: center; }
svg { flex: none; display: block; }
.sprite { position: absolute; width: 0; height: 0; }
.app { display: flex; flex-direction: column; height: 100vh; overflow: hidden; color: #2b2b2b; font: 10px/16px "Liberation Sans", "Noto Sans CJK JP", sans-serif; font-feature-settings: "palt"; border-bottom: 1px solid #111; }
.caret { width: 7px; height: 7px; }

.titlebar { display: flex; align-items: center; height: 22px; background: #fff; padding: 0 2px; }
.logo { width: 15px; height: 16px; }
h1 { margin: 0 auto 0 5px; font: 12px/20px "Noto Sans", sans-serif; color: #111; }
.window-buttons { display: flex; }
.window-buttons button { width: 45px; height: 20px; }
.window-buttons svg { width: 12px; height: 12px; }

.docbar { display: flex; height: 32px; background: #cbcbcb; border-top: 1px solid #c2c2c2; padding-top: 3px; }
.quick { width: 188px; display: flex; align-items: center; padding: 0 0 4px 9px; gap: 18px; }
.quick svg { width: 14px; height: 15px; }
.quick button { gap: 5px; color: #555; }
.quick .caret { width: 7px; height: 7px; }
.quick .q-redo { color: #8c8c8c; margin-left: -6px; }
.doctab { flex: 1; display: flex; align-items: center; justify-content: center; gap: 6px; padding-right: 12px; background: #f1f1f1; border-radius: 4px 4px 0 0; font-size: 12px; color: #444; position: relative; }
.doc-icon { width: 15px; height: 15px; }
.doc-close { position: absolute; right: 5px; top: 8px; }
.doc-close svg { width: 12px; height: 12px; }
.newtab { width: 28px; margin: 0 3px 0 4px; background: #b9b9b9; border-radius: 4px 4px 0 0; }
.newtab svg { width: 14px; height: 14px; }
.status { width: 173px; display: flex; align-items: flex-start; padding-top: 4px; }
.status button { width: 32px; }
.status svg { width: 16px; height: 16px; }

.ribbon { display: flex; height: 80px; background: #f1f1f1; border-bottom: 1px solid #dcdcdc; }
.workspace { width: 107px; height: 59px; margin: 10px 3px 0 12px; border: 1px solid #d9d9d9; border-radius: 4px; gap: 6px; font-weight: bold; font-size: 11px; color: #222; }
.ribbon-main { flex: 1; }
.tabs { display: grid; grid-template-columns: 76px 76px 86px 82px 80px 66px; height: 23px; text-align: center; }
.tabs a { color: #222; text-decoration: none; line-height: 20px; }
.tabs a.active { margin-left: 8px; background: #cde9f6; color: #0a86cf; font-weight: bold; border-bottom: 3px solid #0a93d9; }
.groups { display: flex; height: 56px; }
.group { display: flex; flex-direction: column; align-items: center; padding: 0 4px 0 5px; border-right: 1px solid #d6d6d6; margin: 3px 0 4px; }
.group.inspect { width: 57px; }
.group.insert { width: 95px; }
.group.select { border: 0; }
.tools { display: flex; height: 32px; }
.tool { width: 42px; height: 32px; }
.tool svg { width: 31px; height: 31px; }
.tool.big svg { width: 37px; height: 37px; }
.group-label { gap: 3px; margin-top: 4px; padding-right: 4px; color: #222; }
.finish { width: 91px; margin: -2px 0 0 5px; padding: 5px 0 0; border: 0; background: #cde9f6; }
.finish .group-label { padding: 0; }

.canvas { flex: 1; position: relative; min-height: 0; overflow: hidden; background: #fff; }
.drawing { width: 100%; height: 100%; }
.glyphs { color: #69757b; opacity: .8; }
.glyphs .dark { color: #1f2528; }
.dims { fill: none; stroke: #111; stroke-width: 1; }
.dims.blue { stroke: #0b3c7a; }
.values { fill: #333; font: 15px "Liberation Sans", sans-serif; text-anchor: middle; }
.values .blue { fill: #1c4c88; }

.bar { display: flex; align-items: center; height: 25px; background: #f1f1f1; border: 1px solid #ccc; color: #333; }
.bar .dot { width: 10px; height: 10px; }
.grip { width: 3px; height: 11px; border: solid #999; border-width: 0 1px; }
.dbl { width: 10px; height: 8px; }
.browser { position: absolute; left: 4px; top: 3px; width: 292px; }
.browser .bar { padding: 0 1px 0 4px; gap: 6px; }
.browser .bar .dot, .comments .dot { margin-left: auto; }
.browser .bar span { margin-left: 2px; }
.tree { list-style: none; margin: 3px 0 0; padding: 0; display: grid; grid-auto-rows: 1fr; height: 679px; font-size: 10px; color: #222; }
.tree li { display: flex; align-items: center; padding: 2px 0; }
.tree .level0 { padding-left: 15px; }
.tree .level1 { padding-left: 33px; }
.tree .level2 { padding-left: 70px; }
.arrow { width: 12px; height: 12px; margin-right: 8px; }
.item { display: flex; align-items: stretch; height: 100%; background: #f1f1f1; }
.eye { width: 17px; height: 17px; align-self: center; margin: 0 5px 0 2px; }
.name { display: flex; align-items: center; padding: 0 6px 0 2px; gap: 12px; }
.ico { width: 17px; height: 17px; color: #979797; }
.level2 .name { gap: 11px; padding-right: 4px; }
.root .item { border-left: 2px solid #f1f1f1; padding-right: 8px; align-items: center; }
.root .item::before { content: ""; width: 3px; align-self: stretch; background: #ffadb0; }
.root .name { height: 15px; background: #999; color: #fff; font-weight: bold; font-size: 11px; padding: 0 7px 0 2px; gap: 12px; }
.radio { width: 14px; height: 14px; margin-left: 3px; }
.hover .name { background: #d8d8d8; }
.active .name { background: #0a93d9; color: #fff; font-weight: bold; }
.hatched { position: relative; }
.hatched::after { content: ""; position: absolute; left: 0; right: 2px; bottom: 1px; height: 3px; background: repeating-linear-gradient(135deg, #7c8fb0 0 2px, transparent 2px 5px); }

.viewcube { position: absolute; right: 36px; top: 35px; width: 52px; height: 52px; }
.face { width: 52px; height: 52px; border: 1px solid #aaa; background: linear-gradient(135deg, #f5f5f5, #dcdcdc); color: #8b9199; font: 500 28px/40px "Noto Sans CJK JP", sans-serif; padding-bottom: 6px; box-shadow: 0 6px 6px -4px #999; }
.axis { position: absolute; font-size: 14px; }
.axis.y { left: 0; top: -15px; color: #86f086; }
.axis.x { left: 55px; top: 39px; color: #ff7070; }
.axis.z { left: -7px; top: 46px; color: #7373f5; }

.palette { position: absolute; right: 4px; top: 120px; width: 244px; background: #f1f1f1; border: 1px solid #ccc; }
.palette .bar { border-width: 0 0 1px; height: 24px; padding: 0 4px 0 1px; gap: 3px; }
.palette .bar .dot { margin-left: 4px; }
.palette .bar .dbl { margin-left: auto; }
h2 { display: flex; align-items: center; gap: 3px; margin: 6px 0 5px 4px; font-size: 10px; line-height: 18px; }
.fold { width: 9px; height: 9px; }
.options { display: grid; grid-auto-rows: 1fr; height: 322px; }
.option { display: flex; align-items: center; padding-left: 11px; }
.option span, .option label { width: 129px; white-space: nowrap; }
.option button { width: 21px; margin-right: 8px; }
.option svg { width: 17px; height: 17px; }
.option input { appearance: none; position: relative; margin: 0 0 0 4px; width: 13px; height: 13px; border: 1px solid #444; border-radius: 3px; background: linear-gradient(#cfcfcf, #f4f4f4); }
.option input:checked::after { content: ""; position: absolute; left: 4px; top: 0; width: 4px; height: 8px; border: solid #111; border-width: 0 2px 2px 0; transform: rotate(40deg); }
.palette-foot { display: flex; justify-content: flex-end; padding: 7px 10px 6px; border-top: 1px solid #ccc; }
.palette-foot button { width: 74px; height: 22px; border: 1px solid #bbb; color: #555; }

.comments { position: absolute; left: 4px; bottom: 4px; width: 292px; padding: 0 1px 0 21px; gap: 6px; }
.navbar { position: absolute; left: 639px; bottom: 5px; width: 231px; height: 23px; background: #f1f1f1; display: flex; align-items: center; justify-content: space-between; padding: 0 3px; }
.navbar button { gap: 3px; }
.nav-icon { width: 17px; height: 17px; }
.navbar .caret { width: 6px; height: 6px; }
.selection { position: absolute; right: 18px; bottom: 8px; margin: 0; font-weight: bold; color: #222; }

.timeline { position: relative; display: flex; height: 48px; background: #f1f1f1; border-top: 1px solid #b9b9b9; }
.playback { display: flex; width: 139px; padding: 19px 12px 0 4px; height: 35px; }
.playback button { flex: 1; }
.playback svg { width: 16px; height: 15px; }
.features { flex: 1; display: grid; grid-auto-flow: column; grid-auto-columns: 1fr; list-style: none; margin: 7px 0; padding: 0; border-bottom: 2px solid #c9c9c9; }
.features li { position: relative; display: flex; justify-content: center; align-items: flex-end; height: 24px; border-top: 6px solid #ffadb0; }
.features li::after { content: ""; position: absolute; left: 50%; top: 20px; width: 1px; height: 6px; background: #aaa; }
.features svg { width: 17px; height: 17px; }
.features .pending { border-color: transparent; }
.features .pending svg { opacity: .28; }
.features .current svg { background: #0a93d9; width: 23px; height: 23px; padding: 3px; margin: 0 0 -4px; }
.features .current::before { content: ""; position: absolute; right: -6px; top: -4px; border: 6px solid transparent; border-top: 10px solid #555; border-bottom: 0; z-index: 1; }
.settings { width: 41px; height: 54px; margin-left: 8px; color: #808080; }
.settings svg { width: 17px; height: 17px; }
.handle { position: absolute; left: 344px; top: 0; width: 19px; height: 6px; background: #c9c9c9; border-radius: 0 0 3px 3px; }
</style>
